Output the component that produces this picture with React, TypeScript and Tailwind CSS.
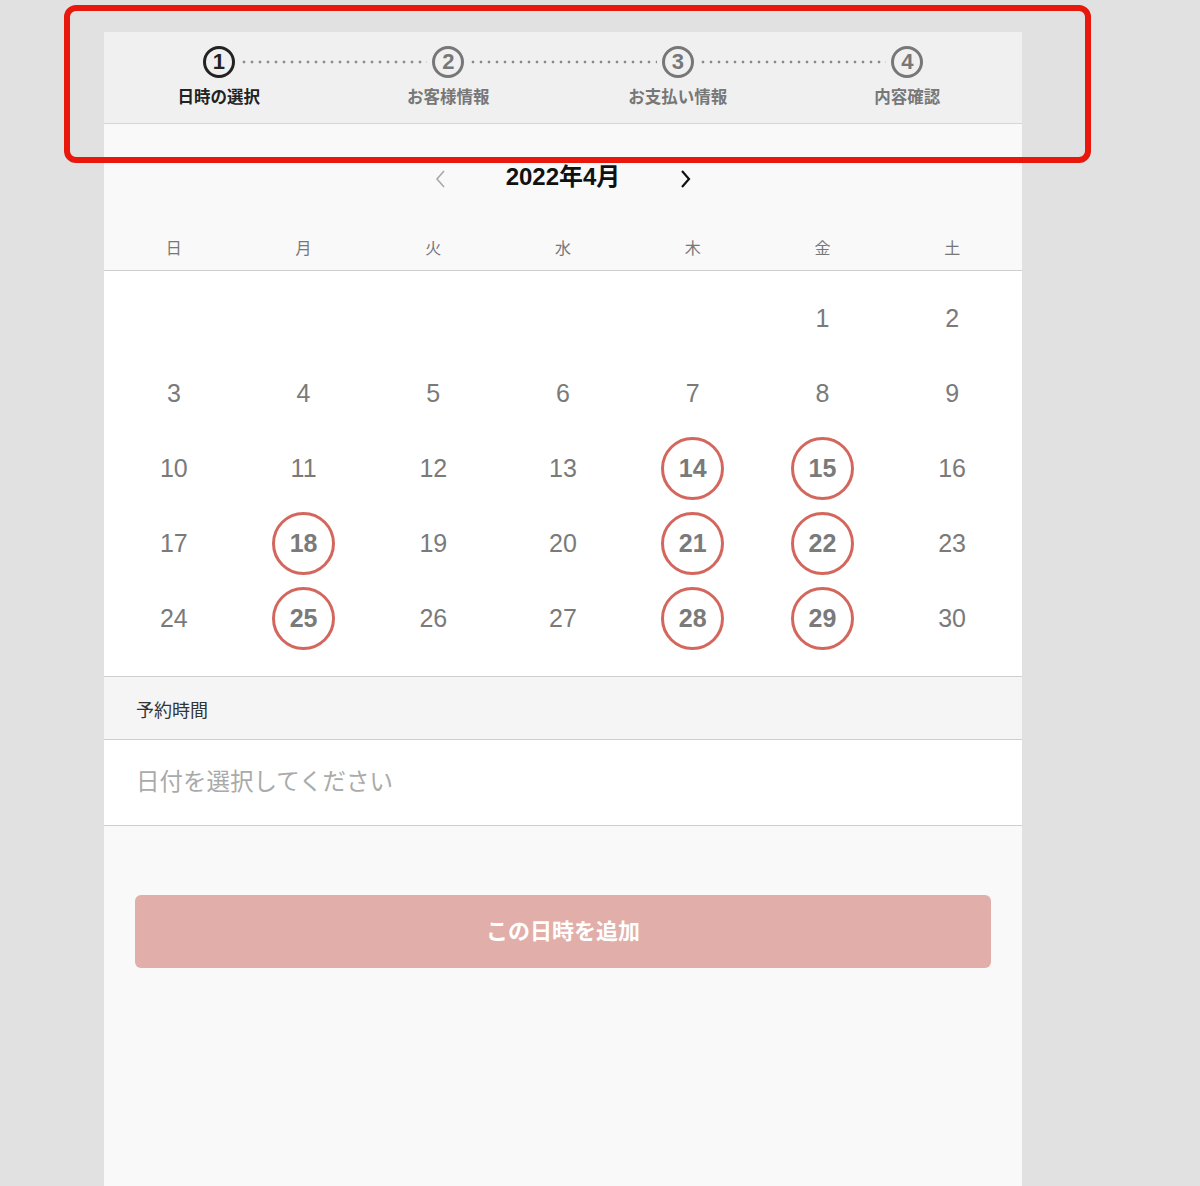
import React from "react";

const steps = ["日時の選択", "お客様情報", "お支払い情報", "内容確認"];
const weekdays = ["日", "月", "火", "水", "木", "金", "土"];
const highlighted = new Set([14, 15, 18, 21, 22, 25, 28, 29]);

function StepCircle({ n, active }: { n: number; active: boolean }) {
  return (
    <div
      className={
        active
          ? "w-[32px] h-[32px] shrink-0 rounded-full border-[3px] border-[#222] text-[#222] flex items-center justify-center text-[22px] font-bold leading-none"
          : "w-[32px] h-[32px] shrink-0 rounded-full border-[3px] border-[#777] text-[#777] flex items-center justify-center text-[22px] font-bold leading-none"
      }
    >
      {n}
    </div>
  );
}

function Dots() {
  return (
    <div className="flex-1 mx-[5px] h-[4px] bg-[radial-gradient(circle,#8a8a8a_1.2px,transparent_1.7px)] bg-[length:8px_4px] bg-repeat-x" />
  );
}

export default function App() {
  const cells: (number | null)[] = [null, null, null, null, null];
  for (let d = 1; d <= 30; d++) cells.push(d);

  return (
    <div
      className="relative min-h-[1186px] bg-[#e1e1e1] pt-[32px]"
      style={{ fontFamily: '"Liberation Sans", "Noto Sans CJK JP", sans-serif' }}
    >
      <div className="ml-[104px] w-[918px] min-h-[1154px] bg-[#f9f9f9] flex flex-col">
        {/* Stepper */}
        <div className="bg-[#f0f0f0] border-b border-[#d6d6d6] pt-[14px] pb-[16px]">
          <div className="flex items-center px-[98.75px]">
            <StepCircle n={1} active />
            <Dots />
            <StepCircle n={2} active={false} />
            <Dots />
            <StepCircle n={3} active={false} />
            <Dots />
            <StepCircle n={4} active={false} />
          </div>
          <div className="grid grid-cols-4 mt-[9px]">
            {steps.map((s, i) => (
              <div
                key={s}
                className={
                  i === 0
                    ? "text-center text-[16.5px] leading-[20px] font-bold text-[#222]"
                    : "text-center text-[16.5px] leading-[20px] font-bold text-[#777]"
                }
              >
                {s}
              </div>
            ))}
          </div>
        </div>

        {/* Month nav */}
        <div className="pt-[38px] flex items-center justify-center gap-[60px]">
          <svg width="12" height="20" viewBox="0 0 12 20" className="mt-[3px]">
            <polyline points="10,2 3,10 10,18" fill="none" stroke="#a8a8a8" strokeWidth="1.6" />
          </svg>
          <div className="text-[24px] leading-[30px] font-bold text-[#111]">2022年4月</div>
          <svg width="12" height="20" viewBox="0 0 12 20" className="mt-[3px]">
            <polyline points="2,2 9,10 2,18" fill="none" stroke="#111" strokeWidth="2.2" />
          </svg>
        </div>

        {/* Weekdays */}
        <div className="grid grid-cols-7 px-[5px] pt-[45px] pb-[9px] border-b border-[#cfcfcf]">
          {weekdays.map((w) => (
            <div key={w} className="text-center text-[16px] leading-[24px] text-[#777]">
              {w}
            </div>
          ))}
        </div>

        {/* Dates */}
        <div className="bg-white grid grid-cols-7 px-[5px] pt-[10px] pb-[20px] border-b border-[#cfcfcf]">
          {cells.map((d, i) => (
            <div key={i} className="h-[75px] flex items-center justify-center">
              {d !== null &&
                (highlighted.has(d) ? (
                  <div className="w-[63px] h-[63px] rounded-full border-[3px] border-[#d4675d] flex items-center justify-center text-[25px] font-bold text-[#7a7a7a]">
                    {d}
                  </div>
                ) : (
                  <span className="text-[25px] text-[#7a7a7a]">{d}</span>
                ))}
            </div>
          ))}
        </div>

        {/* 予約時間 */}
        <div className="bg-[#f5f5f5] h-[63px] flex items-center px-[32px] pt-[6px] border-b border-[#cfcfcf]">
          <span className="text-[18px] text-[#333]">予約時間</span>
        </div>
        <div className="bg-white h-[86px] flex items-center px-[32px] border-b border-[#cfcfcf]">
          <span className="text-[23.5px] text-[#aaa]">日付を選択してください</span>
        </div>

        {/* Button */}
        <div className="px-[31px] pt-[69px]">
          <div className="h-[73px] rounded-[6px] bg-[#e1aeaa] flex items-center justify-center text-white text-[22px] font-bold">
            この日時を追加
          </div>
        </div>
      </div>

      {/* Annotation overlay */}
      <div className="absolute left-[64px] top-[5px] w-[1027px] h-[158px] border-[6px] border-[#e8180d] rounded-[12px] pointer-events-none" />
    </div>
  );
}
